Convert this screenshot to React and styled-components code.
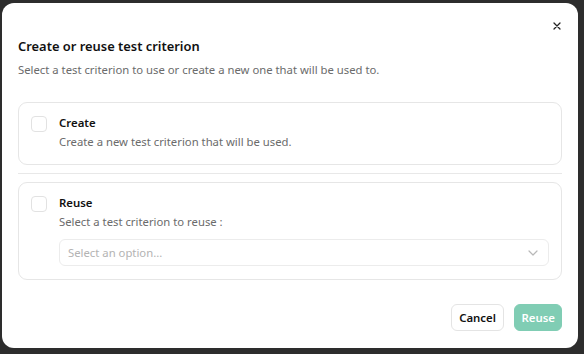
import React from "react";
import styled, { createGlobalStyle } from "styled-components";

const Global = createGlobalStyle`
  html, body { margin: 0; padding: 0; background: #2d2d2d; }
  body { font-family: "Noto Sans", "Segoe UI", Arial, sans-serif; }
  * { box-sizing: border-box; }
`;

const Stage = styled.div`
  width: 584px;
  height: 354px;
  padding: 3px 6px 6px 2px;
`;

const Dialog = styled.div`
  position: relative;
  width: 576px;
  height: 345px;
  background: #ffffff;
  border-radius: 12px;
  padding: 33px 16px 17px 16px;
  display: flex;
  flex-direction: column;
`;

const Close = styled.button`
  position: absolute;
  top: 14px;
  right: 12px;
  width: 18px;
  height: 18px;
  padding: 0;
  border: none;
  background: transparent;
  display: flex;
  align-items: center;
  justify-content: center;
  color: #222;
`;

const Title = styled.h2`
  margin: 0;
  font-size: 12.9px;
  line-height: 20px;
  font-weight: 600;
  color: #111111;
`;

const Subtitle = styled.p`
  margin: 5px 0 0 0;
  font-size: 11.3px;
  line-height: 18px;
  color: #6b6b6b;
`;

const Options = styled.div`
  margin-top: 23px;
  display: flex;
  flex-direction: column;
  gap: 8px;
`;

const Card = styled.div`
  border: 1px solid #e6e6e6;
  border-radius: 9px;
  padding: 13px 12px 13px 12px;
  display: flex;
  gap: 12px;
`;

const Separator = styled.div`
  height: 1px;
  background: #e8e8e8;
`;

const Check = styled.span`
  flex: 0 0 16px;
  width: 16px;
  height: 16px;
  border: 1px solid #e2e2e2;
  border-radius: 4px;
  background: #fff;
`;

const Body = styled.div`
  flex: 1;
  display: flex;
  flex-direction: column;
`;

const Label = styled.div`
  font-size: 11.4px;
  line-height: 18px;
  font-weight: 600;
  color: #111;
  margin-top: -2px;
`;

const Desc = styled.div`
  font-size: 11.3px;
  line-height: 18px;
  color: #6b6b6b;
  margin-top: 1px;
`;

const Select = styled.div`
  margin-top: 8px;
  height: 27px;
  border: 1px solid #ececec;
  border-radius: 6px;
  padding: 0 10px 0 8px;
  display: flex;
  align-items: center;
  justify-content: space-between;
  font-size: 11.3px;
  color: #b3b3b3;
`;

const Footer = styled.div`
  margin-top: auto;
  display: flex;
  justify-content: flex-end;
  gap: 10px;
`;

const Button = styled.button`
  height: 27px;
  padding: 0 ${(p) => (p.$primary ? "6px" : "7.5px")};
  border-radius: 6px;
  font-family: inherit;
  font-size: 11.4px;
  font-weight: 600;
  border: 1px solid ${(p) => (p.$primary ? "#80cdb4" : "#e4e4e4")};
  background: ${(p) => (p.$primary ? "#80cdb4" : "#ffffff")};
  color: ${(p) => (p.$primary ? "#ffffff" : "#111111")};
`;

export default function App() {
  return (
    <>
      <Global />
      <Stage>
        <Dialog>
          <Close aria-label="Close">
            <svg width="8" height="8" viewBox="0 0 8 8">
              <path d="M1 1L7 7M7 1L1 7" stroke="currentColor" strokeWidth="1.3" strokeLinecap="round" />
            </svg>
          </Close>
          <Title>Create or reuse test criterion</Title>
          <Subtitle>Select a test criterion to use or create a new one that will be used to.</Subtitle>
          <Options>
            <Card>
              <Check />
              <Body>
                <Label>Create</Label>
                <Desc>Create a new test criterion that will be used.</Desc>
              </Body>
            </Card>
            <Separator />
            <Card>
              <Check />
              <Body>
                <Label>Reuse</Label>
                <Desc>Select a test criterion to reuse :</Desc>
                <Select>
                  <span>Select an option...</span>
                  <svg width="10" height="6" viewBox="0 0 10 6">
                    <path d="M1 1L5 5L9 1" fill="none" stroke="#b8b8b8" strokeWidth="1.2" strokeLinecap="round" strokeLinejoin="round" />
                  </svg>
                </Select>
              </Body>
            </Card>
          </Options>
          <Footer>
            <Button>Cancel</Button>
            <Button $primary>Reuse</Button>
          </Footer>
        </Dialog>
      </Stage>
    </>
  );
}
